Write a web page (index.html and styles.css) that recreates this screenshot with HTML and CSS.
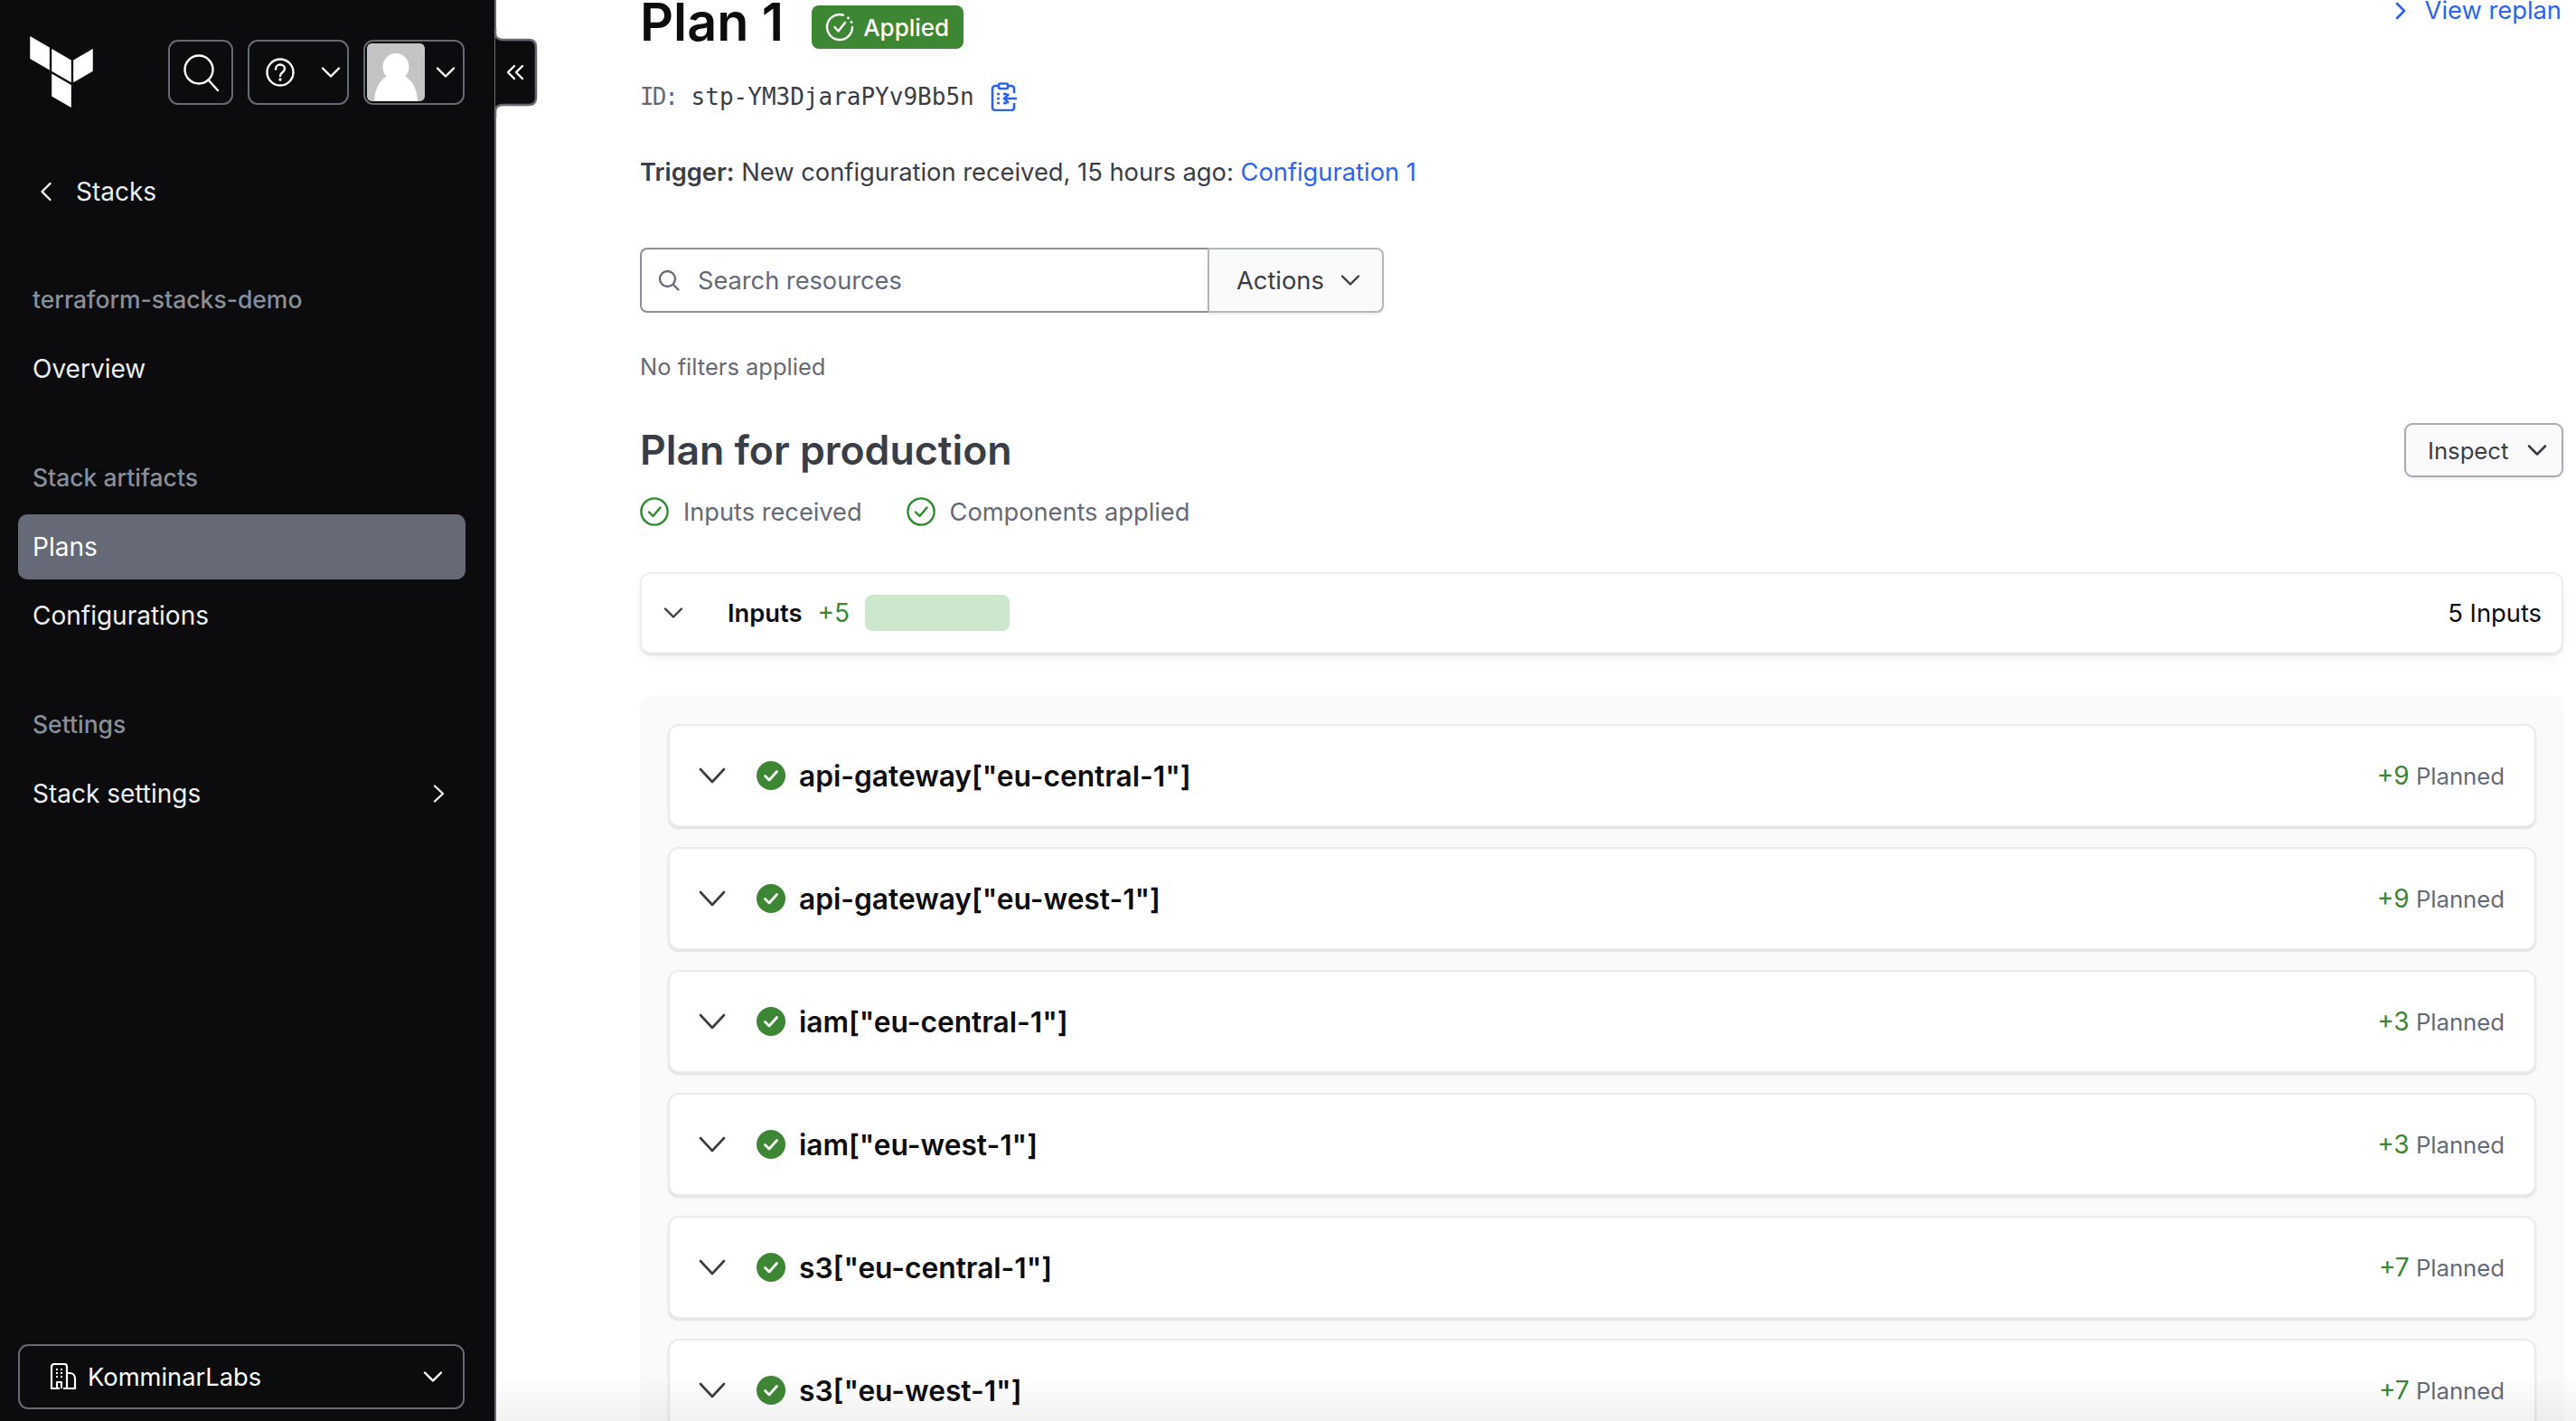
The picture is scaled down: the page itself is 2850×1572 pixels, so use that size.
FILE: index.html
```html
<!DOCTYPE html>
<html lang="en">
<head>
<meta charset="utf-8">
<title>Plan 1</title>
<link rel="stylesheet" href="styles.css">
</head>
<body>
<div class="app">
  <aside class="sidebar">
    <div class="topbar">
      <svg class="logo" viewBox="1.44 0 21.12 24" aria-label="Terraform"><path d="M1.44 0v7.575l6.561 3.79V3.787zm21.12 4.227l-6.561 3.791v7.574l6.56-3.787zM8.72 4.23v7.575l6.561 3.787V8.018zm0 8.405v7.575L15.28 24v-7.578z" fill="#fff"/></svg>
      <div class="tools">
        <div class="tool tool-search">
          <svg width="40" height="44" viewBox="0 0 40 44"><circle cx="17" cy="19" r="15.5" fill="none" stroke="#fff" stroke-width="2.4"/><path d="M27.5 30.5 38 42" fill="none" stroke="#fff" stroke-width="2.4" stroke-linecap="round"/></svg>
        </div>
        <div class="tool tool-help">
          <svg width="32" height="34" viewBox="0 0 32 34"><circle cx="16" cy="17" r="14.5" fill="none" stroke="#fff" stroke-width="2.4"/><path d="M11 13.5c0-3 2.300-5 5-5s5 2 5 4.500c0 4-5 4-5 8" fill="none" stroke="#fff" stroke-width="2.4" stroke-linecap="round"/><circle cx="16" cy="25" r="1.700" fill="#fff"/></svg>
          <svg class="chev-white" width="22" height="14" viewBox="0 0 22 14"><path d="M2 2.500 11 11.500 20 2.500" fill="none" stroke="#fff" stroke-width="2.400" stroke-linecap="round" stroke-linejoin="round"/></svg>
        </div>
        <div class="tool tool-user">
          <svg class="avatar" width="64" height="64" viewBox="0 0 64 64"><rect width="64" height="64" rx="5" fill="#c4c4c4"/><ellipse cx="32" cy="26" rx="14.500" ry="15" fill="#fff"/><path d="M8 64c1-18 10-30 24-30s23 12 24 30z" fill="#fff"/></svg>
          <svg class="chev-white" width="22" height="14" viewBox="0 0 22 14"><path d="M2 2.500 11 11.500 20 2.500" fill="none" stroke="#fff" stroke-width="2.400" stroke-linecap="round" stroke-linejoin="round"/></svg>
        </div>
      </div>
    </div>

    <div class="back">
      <svg width="14" height="22" viewBox="0 0 14 22"><path d="M11.500 2 2.500 11l9 9" fill="none" stroke="#efeff1" stroke-width="2.400" stroke-linecap="round" stroke-linejoin="round"/></svg>
      <span>Stacks</span>
    </div>

    <div class="nav-title">terraform-stacks-demo</div>
    <div class="nav-item">Overview</div>

    <div class="nav-title">Stack artifacts</div>
    <div class="nav-item nav-active">Plans</div>
    <div class="nav-item">Configurations</div>

    <div class="nav-title">Settings</div>
    <div class="nav-item nav-between">
      <span>Stack settings</span>
      <svg width="14" height="22" viewBox="0 0 14 22"><path d="M3 2.500l9 8.500-9 8.500" fill="none" stroke="#efeff1" stroke-width="2.400" stroke-linecap="round" stroke-linejoin="round"/></svg>
    </div>

    <div class="org">
      <svg width="30" height="30" viewBox="0 0 30 30"><path d="M2 28V4a3 3 0 0 1 3-3h11a3 3 0 0 1 3 3v24M19 11h3c4 0 6 3 6 6v11h-9M1 28h10M15 28h4M8 28v-7h5v7" fill="none" stroke="#fff" stroke-width="2.200" stroke-linejoin="round"/><path d="M7 7h2M12 7h2M7 11h2M12 11h2M7 15h2M12 15h2" stroke="#fff" stroke-width="2.200"/></svg>
      <span class="org-name">KomminarLabs</span>
      <svg class="chev-white" width="22" height="14" viewBox="0 0 22 14"><path d="M2 2.500 11 11.500 20 2.500" fill="none" stroke="#fff" stroke-width="2.400" stroke-linecap="round" stroke-linejoin="round"/></svg>
    </div>

    <svg class="collapse" width="52" height="100" viewBox="0 0 52 100">
      <path d="M3 0V6Q3 13 12 13H40Q48 13 48 21V77Q48 85 40 85H12Q3 85 3 92V100Z" fill="#0c0c0e"/>
      <path d="M3 0V6Q3 13 12 13H40Q48 13 48 21V77Q48 85 40 85H12Q3 85 3 92V100" fill="none" stroke="#656a76" stroke-width="2.500"/>
      <path d="M24 42 17 49l7 7M33 42l-7 7 7 7" fill="none" stroke="#fff" stroke-width="2.400" stroke-linecap="round" stroke-linejoin="round"/>
    </svg>
  </aside>

  <main class="main">
    <div class="title-row">
      <h1 class="title">Plan 1</h1>
      <span class="badge">
        <svg width="32" height="32" viewBox="0 0 32 32"><path d="M20 2.600A14 14 0 1 0 30 16" fill="none" stroke="#fff" stroke-width="2.400" stroke-linecap="round"/><path d="M10.500 16l4 4.500L22 11" fill="none" stroke="#fff" stroke-width="2.400" stroke-linecap="round" stroke-linejoin="round"/><circle cx="25.500" cy="6" r="1.400" fill="#fff"/><circle cx="29" cy="10.500" r="1.400" fill="#fff"/></svg>
        Applied
      </span>
      <a class="replan">
        <svg width="14" height="20" viewBox="0 0 14 20"><path d="M3 2l8 8-8 8" fill="none" stroke="#2e63f0" stroke-width="2.600" stroke-linecap="round" stroke-linejoin="round"/></svg>
        <span>View replan</span>
      </a>
    </div>

    <div class="id-row">
      <span class="id-text"><span class="id-label">ID:</span> stp-YM3DjaraPYv9Bb5n</span>
      <svg width="30" height="32" viewBox="0 0 30 32"><path d="M9 4H5a3 3 0 0 0-3 3v21a3 3 0 0 0 3 3h18a3 3 0 0 0 3-3v-5M26 12V7a3 3 0 0 0-3-3h-4" fill="none" stroke="#2e63f0" stroke-width="2.600"/><rect x="9" y="1.500" width="10" height="5.500" rx="1.500" fill="none" stroke="#2e63f0" stroke-width="2.600"/><path d="M7 13h3M7 18h3M7 23h3M14 13h4M14 23h4" stroke="#2e63f0" stroke-width="2.600"/><path d="M29 18H15M20 13l-5 5 5 5" fill="none" stroke="#2e63f0" stroke-width="2.600"/></svg>
    </div>

    <p class="trigger"><strong>Trigger:</strong> New configuration received, 15 hours ago: <a class="link">Configuration 1</a></p>

    <div class="filter">
      <div class="search">
        <svg width="24" height="24" viewBox="0 0 24 24"><circle cx="10.500" cy="10.500" r="8.500" fill="none" stroke="#656a76" stroke-width="2.400"/><path d="M17 17l5.500 5.500" stroke="#656a76" stroke-width="2.400" stroke-linecap="round"/></svg>
        <span>Search resources</span>
      </div>
      <div class="actions">
        <span>Actions</span>
        <svg width="22" height="14" viewBox="0 0 22 14"><path d="M2 2.500 11 11.500 20 2.500" fill="none" stroke="#3b3d45" stroke-width="2.400" stroke-linecap="round" stroke-linejoin="round"/></svg>
      </div>
    </div>

    <p class="no-filters">No filters applied</p>

    <div class="plan-head">
      <h2 class="plan-title">Plan for production</h2>
      <div class="inspect">
        <span>Inspect</span>
        <svg width="22" height="14" viewBox="0 0 22 14"><path d="M2 2.500 11 11.500 20 2.500" fill="none" stroke="#3b3d45" stroke-width="2.600" stroke-linecap="round" stroke-linejoin="round"/></svg>
      </div>
    </div>

    <div class="status-row">
      <span class="status">
        <svg width="32" height="32" viewBox="0 0 32 32"><circle cx="16" cy="16" r="14.600" fill="none" stroke="#2e8b2e" stroke-width="2.400"/><path d="M10 16.500l4.500 4.500 8-9.500" fill="none" stroke="#2e8b2e" stroke-width="2.400" stroke-linecap="round" stroke-linejoin="round"/></svg>
        Inputs received
      </span>
      <span class="status">
        <svg width="32" height="32" viewBox="0 0 32 32"><circle cx="16" cy="16" r="14.600" fill="none" stroke="#2e8b2e" stroke-width="2.400"/><path d="M10 16.500l4.500 4.500 8-9.500" fill="none" stroke="#2e8b2e" stroke-width="2.400" stroke-linecap="round" stroke-linejoin="round"/></svg>
        Components applied
      </span>
    </div>

    <div class="inputs-card">
      <svg class="inputs-chev" width="22" height="14" viewBox="0 0 22 14"><path d="M2 2.500 11 11.500 20 2.500" fill="none" stroke="#3b3d45" stroke-width="2.400" stroke-linecap="round" stroke-linejoin="round"/></svg>
      <span class="inputs-name">Inputs</span>
      <span class="plus">+5</span>
      <span class="pill"></span>
      <span class="inputs-count">5 Inputs</span>
    </div>

    <section class="group">
      <div class="row">
        <svg class="row-chev" width="30" height="18" viewBox="0 0 30 18"><path d="M2 2l13 14L28 2" fill="none" stroke="#3b3d45" stroke-width="2.600" stroke-linecap="round" stroke-linejoin="round"/></svg>
        <svg class="row-ok" width="32" height="32" viewBox="0 0 32 32"><circle cx="16" cy="16" r="16" fill="#3d8634"/><path d="M9.500 16.500l4.500 4.500 8.500-9.500" fill="none" stroke="#fff" stroke-width="2.800" stroke-linecap="round" stroke-linejoin="round"/></svg>
        <span class="row-name">api-gateway["eu-central-1"]</span>
        <span class="row-meta"><span class="plus">+9</span> Planned</span>
      </div>
      <div class="row">
        <svg class="row-chev" width="30" height="18" viewBox="0 0 30 18"><path d="M2 2l13 14L28 2" fill="none" stroke="#3b3d45" stroke-width="2.600" stroke-linecap="round" stroke-linejoin="round"/></svg>
        <svg class="row-ok" width="32" height="32" viewBox="0 0 32 32"><circle cx="16" cy="16" r="16" fill="#3d8634"/><path d="M9.500 16.500l4.500 4.500 8.500-9.500" fill="none" stroke="#fff" stroke-width="2.800" stroke-linecap="round" stroke-linejoin="round"/></svg>
        <span class="row-name">api-gateway["eu-west-1"]</span>
        <span class="row-meta"><span class="plus">+9</span> Planned</span>
      </div>
      <div class="row">
        <svg class="row-chev" width="30" height="18" viewBox="0 0 30 18"><path d="M2 2l13 14L28 2" fill="none" stroke="#3b3d45" stroke-width="2.600" stroke-linecap="round" stroke-linejoin="round"/></svg>
        <svg class="row-ok" width="32" height="32" viewBox="0 0 32 32"><circle cx="16" cy="16" r="16" fill="#3d8634"/><path d="M9.500 16.500l4.500 4.500 8.500-9.500" fill="none" stroke="#fff" stroke-width="2.800" stroke-linecap="round" stroke-linejoin="round"/></svg>
        <span class="row-name">iam["eu-central-1"]</span>
        <span class="row-meta"><span class="plus">+3</span> Planned</span>
      </div>
      <div class="row">
        <svg class="row-chev" width="30" height="18" viewBox="0 0 30 18"><path d="M2 2l13 14L28 2" fill="none" stroke="#3b3d45" stroke-width="2.600" stroke-linecap="round" stroke-linejoin="round"/></svg>
        <svg class="row-ok" width="32" height="32" viewBox="0 0 32 32"><circle cx="16" cy="16" r="16" fill="#3d8634"/><path d="M9.500 16.500l4.500 4.500 8.500-9.500" fill="none" stroke="#fff" stroke-width="2.800" stroke-linecap="round" stroke-linejoin="round"/></svg>
        <span class="row-name">iam["eu-west-1"]</span>
        <span class="row-meta"><span class="plus">+3</span> Planned</span>
      </div>
      <div class="row">
        <svg class="row-chev" width="30" height="18" viewBox="0 0 30 18"><path d="M2 2l13 14L28 2" fill="none" stroke="#3b3d45" stroke-width="2.600" stroke-linecap="round" stroke-linejoin="round"/></svg>
        <svg class="row-ok" width="32" height="32" viewBox="0 0 32 32"><circle cx="16" cy="16" r="16" fill="#3d8634"/><path d="M9.500 16.500l4.500 4.500 8.500-9.500" fill="none" stroke="#fff" stroke-width="2.800" stroke-linecap="round" stroke-linejoin="round"/></svg>
        <span class="row-name">s3["eu-central-1"]</span>
        <span class="row-meta"><span class="plus">+7</span> Planned</span>
      </div>
      <div class="row">
        <svg class="row-chev" width="30" height="18" viewBox="0 0 30 18"><path d="M2 2l13 14L28 2" fill="none" stroke="#3b3d45" stroke-width="2.600" stroke-linecap="round" stroke-linejoin="round"/></svg>
        <svg class="row-ok" width="32" height="32" viewBox="0 0 32 32"><circle cx="16" cy="16" r="16" fill="#3d8634"/><path d="M9.500 16.500l4.500 4.500 8.500-9.500" fill="none" stroke="#fff" stroke-width="2.800" stroke-linecap="round" stroke-linejoin="round"/></svg>
        <span class="row-name">s3["eu-west-1"]</span>
        <span class="row-meta"><span class="plus">+7</span> Planned</span>
      </div>
    </section>
    <div class="fade"></div>
  </main>
</div>
</body>
</html>
```

FILE: styles.css
```css
* { box-sizing: border-box; }
html, body { margin: 0; height: 100%; overflow: hidden; background: #fff; }
body { font-family: Inter, "Liberation Sans", sans-serif; font-size: 27.3px; color: #0c0c0e; }
svg { display: block; flex: none; }

.app { display: flex; width: 2850px; height: 1572px; }

/* Sidebar */
.sidebar { position: relative; flex: none; width: 549px; height: 100%; padding: 0 32px 13px 20px; display: flex; flex-direction: column; background: #0c0c0e; border-right: 2px solid #656a76; color: #efeff1; }
.topbar { display: flex; align-items: flex-start; flex: none; height: 176px; padding: 40px 0 0 13px; }
.logo { width: 70px; height: 79px; }
.tools { display: flex; gap: 16px; margin: 4px 0 0 83px; }
.tool { display: flex; align-items: center; height: 72px; border: 2px solid #656a76; border-radius: 11px; }
.tool-search { width: 72px; justify-content: center; padding-left: 1px; }
.tool-help { width: 112px; padding: 0 7px 0 18px; justify-content: space-between; }
.tool-user { width: 112px; padding: 0 8px 0 2px; justify-content: space-between; }
.avatar { border-radius: 5px; }

.back { display: flex; align-items: center; flex: none; gap: 26px; height: 72px; padding-left: 24px; font-size: 28px; }
.nav-title { flex: none; height: 40px; line-height: 40px; padding-left: 16px; margin: 63px 0 21px; font-size: 26.500px; font-weight: 500; color: #8a8e99; }
.nav-item + .nav-title { margin-top: 64px; }
.nav-item { display: flex; align-items: center; flex: none; height: 72px; padding: 0 16px; margin-top: 4px; border-radius: 10px; font-size: 28px; color: #efeff1; }
.nav-title + .nav-item { margin-top: 0; }
.nav-active { background: #656a76; color: #fff; }
.nav-between { justify-content: space-between; padding-right: 23px; }

.org { display: flex; align-items: center; flex: none; height: 72px; margin-top: auto; margin-right: 1px; padding: 0 22px 0 33px; border: 2px solid #656a76; border-radius: 11px; color: #fff; font-size: 27.300px; }
.org-name { flex: 1; margin-left: 12px; }

.collapse { position: absolute; left: 545px; top: 31px; z-index: 2; }

/* Main */
.main { position: relative; flex: 1; min-width: 0; height: 100%; overflow: hidden; padding: 0 14px 0 159px; }
.title-row { display: flex; align-items: flex-start; height: 91px; }
.title { margin: 0; font-size: 57.500px; line-height: 48px; font-weight: 600; color: #0c0c0e; }
.badge { display: flex; align-items: center; gap: 10px; height: 48px; margin: 6px 0 0 31px; padding: 0 16px 0 15px; border-radius: 8px; background: #3d8634; color: #fff; font-size: 26px; font-weight: 500; }
.replan { display: flex; align-items: center; gap: 20px; margin: 0 2px 0 auto; line-height: 24px; color: #2e63f0; font-size: 27.300px; }

.id-row { display: flex; align-items: center; gap: 18px; height: 32px; }
.id-text { font-family: "DejaVu Sans Mono", "Liberation Mono", monospace; font-size: 26px; color: #3b3d45; }
.id-label { color: #656a76; letter-spacing: -2px; }

.trigger { margin: 50px 0 0; line-height: 36px; color: #3b3d45; }
.trigger strong { font-weight: 600; }
.link { color: #2e63f0; }

.filter { display: flex; width: 823px; height: 72px; margin-top: 65px; }
.search { display: flex; align-items: center; gap: 20px; flex: 1; padding-left: 18px; border: 2px solid #8c909c; border-right: 0; border-radius: 8px 0 0 8px; color: #656a76; font-size: 27.200px; }
.actions { display: flex; align-items: center; justify-content: space-between; width: 195px; padding: 0 24px 0 30px; border: 2px solid #b2b6bd; border-radius: 0 8px 8px 0; background: #fafafa; box-shadow: 0 2px 3px rgba(101,106,118,.12); color: #3b3d45; }

.no-filters { margin: 44px 0 0; line-height: 32px; font-size: 25.500px; color: #656a76; }

.plan-head { display: flex; align-items: center; justify-content: space-between; height: 60px; margin-top: 46px; }
.plan-title { margin: 0; font-size: 44.600px; font-weight: 600; line-height: 60px; color: #3b3d45; }
.inspect { display: flex; align-items: center; justify-content: space-between; width: 176px; height: 60px; padding: 0 16px 0 24px; border: 2px solid #a8abb3; border-radius: 9px; background: #fafafa; box-shadow: 0 2px 3px rgba(101,106,118,.12); color: #3b3d45; font-size: 25.700px; }

.status-row { display: flex; gap: 49px; height: 32px; margin-top: 22px; }
.status { display: flex; align-items: center; gap: 16px; color: #656a76; font-size: 27.200px; }

.inputs-card { display: flex; align-items: center; height: 90px; margin-top: 51px; padding: 0 22px 0 24px; border: 2px solid #eeeef0; border-radius: 12px; background: #fff; box-shadow: 0 2px 2px rgba(101,106,118,.15), 0 8px 16px -6px rgba(101,106,118,.12); }
.inputs-chev { margin-right: 49px; }
.inputs-name { font-weight: 600; }
.plus { color: #3d8634; }
.inputs-card .plus { margin-left: 17px; font-size: 28px; }
.pill { width: 160px; height: 40px; margin-left: 17px; border-radius: 8px; background: #cde7cc; }
.inputs-count { margin-left: auto; }

.group { display: flex; flex-direction: column; gap: 22px; margin-top: 47px; padding: 31px 30px 31px 31px; border-radius: 12px; background: #fafafa; }
.row { display: flex; align-items: center; flex: none; height: 114px; padding: 0 33px 0 32px; border: 2px solid #eaeaec; border-radius: 12px; background: #fff; box-shadow: 0 2px 2px rgba(101,106,118,.18); }
.row-chev { margin-right: 34px; }
.row-name { margin-left: 15px; font-size: 31.700px; font-weight: 600; color: #0c0c0e; }
.row-meta { margin-left: auto; font-size: 25.700px; color: #656a76; }
.row-meta .plus { font-size: 28px; }

.fade { position: absolute; left: 0; right: 0; bottom: 0; height: 52px; background: linear-gradient(rgba(60,60,60,0), rgba(60,60,60,.07)); }
```
